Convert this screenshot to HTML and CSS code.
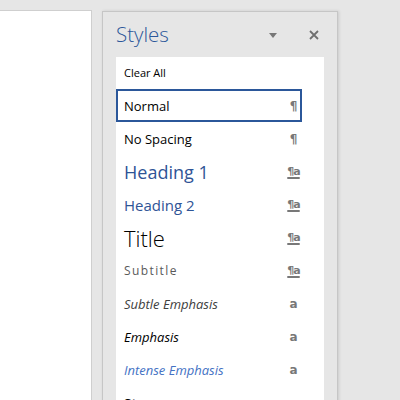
FILE: index.html
```html
<!DOCTYPE html>
<html>

<head lang="en">
  <meta charset="UTF-8">
  <title>Styles</title>
  <link rel="stylesheet" href="styles.css">
</head>

<body>
  <div class="workspace">
    <div class="doc-page"></div>

    <div class="styles-pane">
      <div class="pane-header">
        <span class="pane-title">Styles</span>
        <span class="pane-menu"></span>
        <svg class="pane-close" width="10" height="10" viewBox="0 0 10 10">
          <path d="M1 1 L9 9 M9 1 L1 9" stroke="#6f6f6f" stroke-width="1.8" fill="none" />
        </svg>
      </div>

      <div class="style-list">
        <div class="clear-all">Clear All</div>
        <div class="style-row selected">
          <span class="s-normal">Normal</span><span class="mark">¶</span>
        </div>
        <div class="style-row">
          <span class="s-normal">No Spacing</span><span class="mark">¶</span>
        </div>
        <div class="style-row">
          <span class="s-h1">Heading 1</span><span class="mark linked">¶a</span>
        </div>
        <div class="style-row">
          <span class="s-h2">Heading 2</span><span class="mark linked">¶a</span>
        </div>
        <div class="style-row">
          <span class="s-title">Title</span><span class="mark linked">¶a</span>
        </div>
        <div class="style-row">
          <span class="s-subtitle">Subtitle</span><span class="mark linked">¶a</span>
        </div>
        <div class="style-row">
          <span class="s-subtle">Subtle Emphasis</span><span class="mark char">a</span>
        </div>
        <div class="style-row">
          <span class="s-emph">Emphasis</span><span class="mark char">a</span>
        </div>
        <div class="style-row">
          <span class="s-intense">Intense Emphasis</span><span class="mark char">a</span>
        </div>
        <div class="style-row">
          <span class="s-strong">Strong</span><span class="mark char">a</span>
        </div>
      </div>
    </div>
  </div>
</body>

</html>
```

FILE: styles.css
```css
html,
body {
  margin: 0px;
  padding: 0px;
  height: 100%;
  overflow: hidden;
}

body {
  background: #e6e6e6;
  font-family: "Open Sans", "Noto Sans", sans-serif;
  color: #000000;
}

.workspace {
  display: flex;
  align-items: flex-start;
  height: 400px;
}

.doc-page {
  width: 92px;
  height: 400px;
  margin-top: 10px;
  background: #ffffff;
  border-top: 1px solid #cfcfcf;
  border-right: 1px solid #cfcfcf;
  box-sizing: border-box;
}

.styles-pane {
  width: 236px;
  height: 400px;
  margin-left: 10px;
  margin-top: 11px;
  background: #e6e6e6;
  border: 1px solid #c6c6c6;
  box-shadow: 1px 0px 3px rgba(0, 0, 0, 0.12);
  box-sizing: border-box;
}

.pane-header {
  height: 45px;
  display: flex;
  align-items: center;
  padding-left: 13px;
  padding-right: 18px;
}

.pane-title {
  flex: 1;
  font-size: 20.5px;
  font-weight: 300;
  color: #2b579a;
  margin-top: -2px;
}

.pane-menu {
  width: 0px;
  height: 0px;
  border-left: 4.5px solid transparent;
  border-right: 4.5px solid transparent;
  border-top: 5px solid #777777;
  margin-right: 32px;
  margin-top: 1px;
}

.pane-close {
  display: block;
}

.style-list {
  margin-left: 13px;
  width: 208px;
  height: 360px;
  background: #ffffff;
  padding-right: 22px;
  box-sizing: border-box;
}

.clear-all {
  height: 32px;
  line-height: 32px;
  padding-left: 8px;
  font-size: 11px;
}

.style-row {
  height: 33px;
  display: flex;
  align-items: center;
  justify-content: space-between;
  padding: 0px 2px 0px 8px;
  box-sizing: border-box;
  white-space: nowrap;
}

.style-row.selected {
  border: 2px solid #2b579a;
  padding-left: 6px;
  padding-right: 0px;
}

.mark {
  font-family: "DejaVu Sans", sans-serif;
  font-size: 12px;
  font-weight: bold;
  color: #787878;
  width: 13px;
  text-align: center;
}

.mark.linked {
  font-size: 11px;
  text-decoration: underline;
  text-decoration-thickness: 2px;
  text-underline-offset: 2px;
  letter-spacing: -1px;
}

.mark.char {
  font-family: "DejaVu Sans", sans-serif;
  font-size: 12px;
}

.s-normal {
  font-size: 13px;
}

.s-h1 {
  font-size: 18px;
  font-weight: 400;
  color: #2f5496;
}

.s-h2 {
  font-size: 15px;
  font-weight: 400;
  color: #2f5496;
}

.s-title {
  font-size: 22px;
  font-weight: 300;
}

.s-subtitle {
  font-size: 12px;
  color: #5a5a5a;
  letter-spacing: 1.4px;
}

.s-subtle {
  font-size: 13px;
  font-style: italic;
  color: #404040;
}

.s-emph {
  font-size: 13px;
  font-style: italic;
}

.s-intense {
  font-size: 13px;
  font-style: italic;
  color: #4472c4;
}

.s-strong {
  font-size: 13px;
  font-weight: bold;
}
```
